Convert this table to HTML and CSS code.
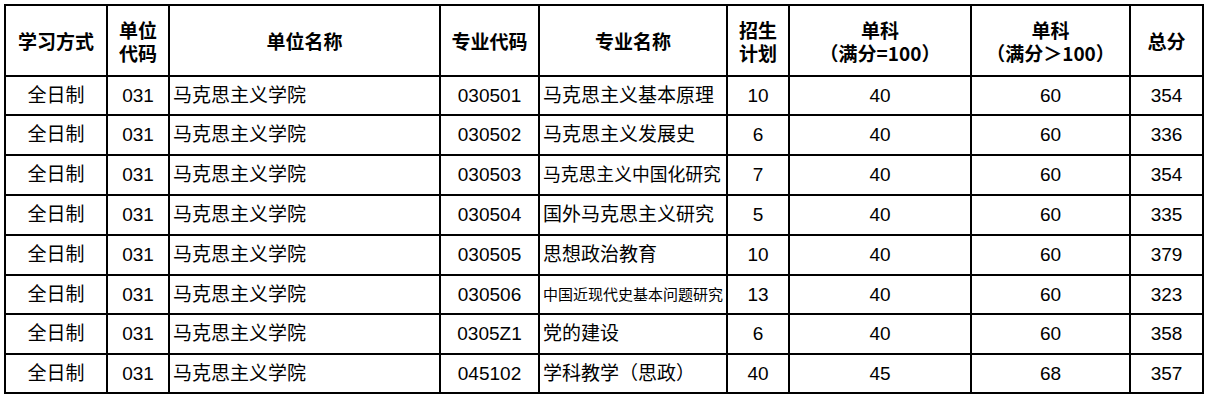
FILE: index.html
```html
<!DOCTYPE html>
<html lang="zh-CN">
<head>
<meta charset="utf-8">
<title>招生分数线</title>
<link rel="stylesheet" href="styles.css">
</head>
<body>
<table class="grid">
  <colgroup>
    <col class="c1"><col class="c2"><col class="c3"><col class="c4"><col class="c5">
    <col class="c6"><col class="c7"><col class="c8"><col class="c9">
  </colgroup>
  <thead>
    <tr class="head">
      <th>学习方式</th>
      <th>单位<br>代码</th>
      <th>单位名称</th>
      <th>专业代码</th>
      <th>专业名称</th>
      <th>招生<br>计划</th>
      <th>单科<br>（满分=100）</th>
      <th>单科<br>（满分＞100）</th>
      <th>总分</th>
    </tr>
  </thead>
  <tbody>
    <tr class="h37">
      <td>全日制</td><td>031</td><td class="left">马克思主义学院</td><td>030501</td><td class="left">马克思主义基本原理</td><td>10</td><td>40</td><td>60</td><td>354</td>
    </tr>
    <tr class="h38">
      <td>全日制</td><td>031</td><td class="left">马克思主义学院</td><td>030502</td><td class="left">马克思主义发展史</td><td>6</td><td>40</td><td>60</td><td>336</td>
    </tr>
    <tr class="h38">
      <td>全日制</td><td>031</td><td class="left">马克思主义学院</td><td>030503</td><td class="left fit">马克思主义中国化研究</td><td>7</td><td>40</td><td>60</td><td>354</td>
    </tr>
    <tr class="h38">
      <td>全日制</td><td>031</td><td class="left">马克思主义学院</td><td>030504</td><td class="left">国外马克思主义研究</td><td>5</td><td>40</td><td>60</td><td>335</td>
    </tr>
    <tr class="h38">
      <td>全日制</td><td>031</td><td class="left">马克思主义学院</td><td>030505</td><td class="left">思想政治教育</td><td>10</td><td>40</td><td>60</td><td>379</td>
    </tr>
    <tr class="h37">
      <td>全日制</td><td>031</td><td class="left">马克思主义学院</td><td>030506</td><td class="left small">中国近现代史基本问题研究</td><td>13</td><td>40</td><td>60</td><td>323</td>
    </tr>
    <tr class="h38">
      <td>全日制</td><td>031</td><td class="left">马克思主义学院</td><td>0305Z1</td><td class="left">党的建设</td><td>6</td><td>40</td><td>60</td><td>358</td>
    </tr>
    <tr class="h37">
      <td>全日制</td><td>031</td><td class="left">马克思主义学院</td><td>045102</td><td class="left">学科教学（思政）</td><td>40</td><td>45</td><td>68</td><td>357</td>
    </tr>
  </tbody>
</table>
</body>
</html>
```

FILE: styles.css
```css
html, body {
  margin: 0;
  padding: 0;
  background: #ffffff;
}

body {
  padding: 4px 0 0 4px;
}

.grid {
  table-layout: fixed;
  width: 1200px;
  border-collapse: separate;
  border-spacing: 2px;
  background: #000000;
  color: #000000;
  font-family: "Liberation Sans", "Noto Sans CJK SC", sans-serif;
  font-size: 19px;
}

.c1 { width: 100px; }
.c2 { width: 60px; }
.c3 { width: 269px; }
.c4 { width: 97px; }
.c5 { width: 186px; }
.c6 { width: 60px; }
.c7 { width: 180px; }
.c8 { width: 157px; }
.c9 { width: 71px; }

.grid th,
.grid td {
  background: #ffffff;
  padding: 0;
  text-align: center;
  vertical-align: middle;
  white-space: nowrap;
  overflow: hidden;
}

.grid th {
  font-family: "Noto Sans CJK SC", sans-serif;
  font-weight: 700;
  font-size: 19px;
  line-height: 23px;
}

.head th {
  height: 69px;
}

.grid td {
  line-height: 22px;
}

.h37 td { height: 37px; }
.h38 td { height: 38px; }

.grid td.left {
  text-align: left;
  padding-left: 3px;
}

.grid td.fit {
  font-size: 17.8px;
}

.grid td.small {
  font-size: 15px;
}
```
